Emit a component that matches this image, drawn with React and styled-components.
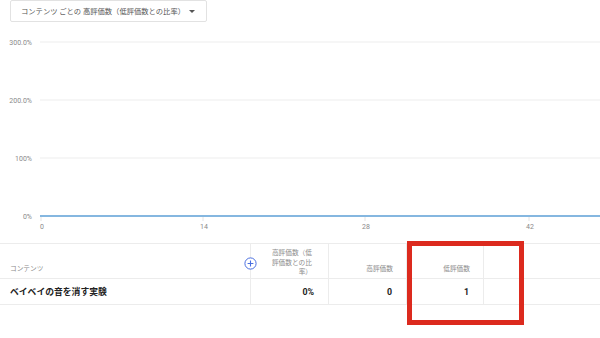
import React from 'react'
import styled, { createGlobalStyle } from 'styled-components'

const GlobalStyle = createGlobalStyle`
  html, body { margin: 0; padding: 0; background: #fff; }
  body {
    font-family: Roboto, "Noto Sans CJK JP", "Noto Sans", sans-serif;
    width: 600px; height: 338px; overflow: hidden;
  }
`

const Page = styled.div`
  width: 600px;
  height: 338px;
  display: flex;
  flex-direction: column;
`

const SelectRow = styled.div`
  padding-left: 10px;
  height: 22px;
`

const Select = styled.div`
  box-sizing: border-box;
  width: 197px;
  height: 22px;
  border: 1px solid #e2e2e2;
  border-radius: 2px;
  display: flex;
  align-items: center;
  justify-content: space-between;
  padding: 0 11px 0 10px;
  font-size: 7.3px;
  color: #555;
  white-space: nowrap;
`

const Caret = styled.span`
  width: 0;
  height: 0;
  border-left: 3.5px solid transparent;
  border-right: 3.5px solid transparent;
  border-top: 3.5px solid #555;
`

const Chart = styled.svg`
  display: block;
  margin-top: 8px;
  width: 600px;
  height: 213px;
`

const TableWrap = styled.div`
  position: relative;
  border-top: 1px solid #ececec;
`

const Row = styled.div`
  display: grid;
  grid-template-columns: 250px 78px 78px 77px 1fr;
  grid-template-rows: 100%;
  height: ${p => p.$h}px;
  border-bottom: 1px solid #ececec;
  box-sizing: border-box;
  overflow: hidden;
`

const Cell = styled.div`
  box-sizing: border-box;
  min-width: 0;
  border-left: ${p => (p.$first ? 'none' : '1px solid #ececec')};
  display: flex;
  align-items: ${p => p.$align || 'center'};
  justify-content: ${p => (p.$left ? 'flex-start' : 'flex-end')};
  padding: ${p => p.$pad || '0 14px 0 10px'};
  text-align: ${p => (p.$left ? 'left' : 'right')};
`

const HeadText = styled.span`
  font-size: 6.7px;
  line-height: 9.5px;
  color: #8a8a8a;
  white-space: nowrap;
`

const BodyText = styled.span`
  font-size: ${p => p.$size || 8.8}px;
  font-weight: 700;
  color: #222;
  white-space: nowrap;
`

const PlusBadge = styled.svg`
  position: absolute;
  left: 244px;
  top: 13px;
  width: 13px;
  height: 13px;
`

const Highlight = styled.div`
  position: absolute;
  left: 407px;
  top: -3px;
  width: 117px;
  height: 84px;
  box-sizing: border-box;
  border: 5px solid #dc2a1e;
  pointer-events: none;
`

const yTicks = [
  { y: 12, label: '300.0%' },
  { y: 70, label: '200.0%' },
  { y: 128, label: '100%' },
]
const xTicks = [
  { x: 42, label: '0' },
  { x: 204, label: '14' },
  { x: 366, label: '28' },
  { x: 530, label: '42' },
]

export default function App() {
  return (
    <Page>
      <GlobalStyle />
      <SelectRow>
        <Select>
          <span>コンテンツ ごとの 高評価数（低評価数との比率）</span>
          <Caret />
        </Select>
      </SelectRow>

      <Chart viewBox="0 0 600 213">
        {yTicks.map(t => (
          <g key={t.label}>
            <line x1="40" x2="600" y1={t.y} y2={t.y} stroke="#ededed" strokeWidth="1" />
            <text x="32" y={t.y + 2.5} fontSize="7" fill="#8a8a8a" textAnchor="end"
              fontFamily="Roboto, sans-serif">{t.label}</text>
          </g>
        ))}
        <text x="32" y={188.5} fontSize="7" fill="#8a8a8a" textAnchor="end"
          fontFamily="Roboto, sans-serif">0%</text>
        {xTicks.map(t => (
          <g key={t.label}>
            <line x1={t.x - 1} x2={t.x - 1} y1="187" y2="191" stroke="#e4e4e4" strokeWidth="1" />
            <text x={t.x} y="198.5" fontSize="7" fill="#8a8a8a" textAnchor="middle"
              fontFamily="Roboto, sans-serif">{t.label}</text>
          </g>
        ))}
        <line x1="40" x2="600" y1="186" y2="186" stroke="#5c9fd6" strokeWidth="1.6" />
      </Chart>

      <TableWrap>
        <Row $h={35}>
          <Cell $first $left $align="flex-end" $pad="0 10px 4px 10px">
            <HeadText>コンテンツ</HeadText>
          </Cell>
          <Cell $align="flex-start" $pad="5px 16px 0 4px">
            <HeadText>高評価数（低<br />評価数との比<br />率）</HeadText>
          </Cell>
          <Cell $align="flex-end" $pad="0 13px 4px 4px">
            <HeadText>高評価数</HeadText>
          </Cell>
          <Cell $align="flex-end" $pad="0 13px 4px 4px">
            <HeadText>低評価数</HeadText>
          </Cell>
          <Cell />
        </Row>
        <Row $h={26}>
          <Cell $first $left>
            <BodyText>ベイベイの音を消す実験</BodyText>
          </Cell>
          <Cell $pad="0 14px 0 4px"><BodyText>0%</BodyText></Cell>
          <Cell $pad="0 14px 0 4px"><BodyText>0</BodyText></Cell>
          <Cell $pad="0 14px 0 4px"><BodyText>1</BodyText></Cell>
          <Cell />
        </Row>

        <PlusBadge viewBox="0 0 13 13">
          <circle cx="6.5" cy="6.5" r="5.6" fill="#fff" stroke="#4a6fe0" strokeWidth="1" />
          <path d="M6.5 3.6v5.8M3.6 6.5h5.8" stroke="#4a6fe0" strokeWidth="1.1" />
        </PlusBadge>
        <Highlight />
      </TableWrap>
    </Page>
  )
}
